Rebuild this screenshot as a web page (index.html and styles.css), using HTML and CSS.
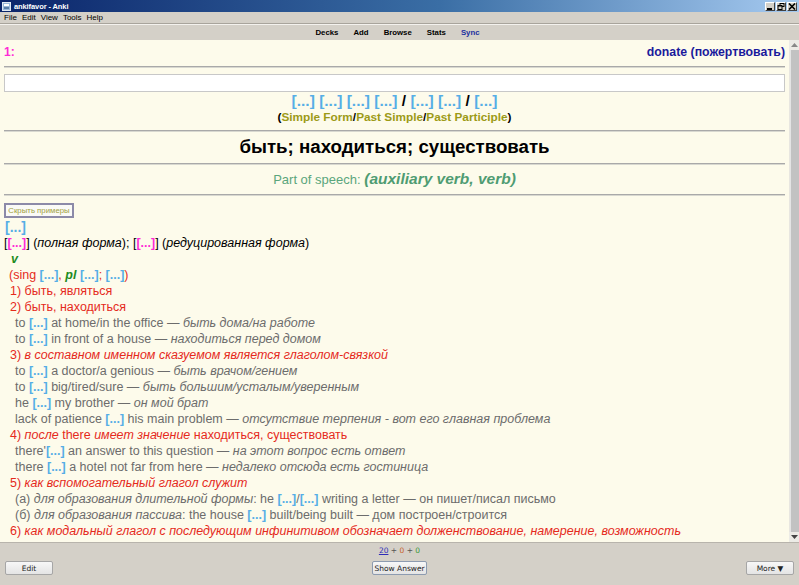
FILE: index.html
```html
<!DOCTYPE html>
<html>
<head>
<meta charset="utf-8">
<link rel="stylesheet" href="styles.css">
</head>
<body>
<div class="window">
  <div class="titlebar">
    <div class="title-left">
      <svg class="app-icon" width="9" height="9" viewBox="0 0 9 9"><rect x="0.5" y="0.5" width="8" height="8" fill="#9ab8d8" stroke="#dfe8f2"/><rect x="2" y="2" width="5" height="2" fill="#fff"/><rect x="2" y="5" width="5" height="2" fill="#5a7fa8"/></svg>
      <span class="title-text">ankifavor - Anki</span>
    </div>
    <div class="win-btns">
      <span class="win-btn"><svg width="8" height="7" viewBox="0 0 8 7"><rect x="1" y="5" width="5" height="2" fill="#000"/></svg></span>
      <span class="win-btn"><svg width="8" height="7" viewBox="0 0 8 7"><rect x="3" y="0.5" width="4" height="3" fill="none" stroke="#000"/><rect x="1" y="2.5" width="4" height="4" fill="#d4d0c8" stroke="#000"/><rect x="1" y="2.5" width="4" height="1" fill="#000"/></svg></span>
      <span class="win-btn"><svg width="8" height="7" viewBox="0 0 8 7"><path d="M1 0.5 L7 6.5 M7 0.5 L1 6.5" stroke="#000" stroke-width="1.6"/></svg></span>
    </div>
  </div>
  <div class="menubar">
    <span class="menu-item">File</span>
    <span class="menu-item">Edit</span>
    <span class="menu-item">View</span>
    <span class="menu-item">Tools</span>
    <span class="menu-item">Help</span>
  </div>
  <div class="toolbar">
    <span class="tool">Decks</span>
    <span class="tool">Add</span>
    <span class="tool">Browse</span>
    <span class="tool">Stats</span>
    <span class="tool sync">Sync</span>
  </div>
  <div class="main">
    <div class="content">
      <div class="top-row">
        <span class="num">1:</span>
        <span class="donate">donate (пожертвовать)</span>
      </div>
      <div class="rule r1"></div>
      <div class="answer-box"></div>
      <div class="forms"><span class="cl">[...]</span> <span class="cl">[...]</span> <span class="cl">[...]</span> <span class="cl">[...]</span> / <span class="cl">[...]</span> <span class="cl">[...]</span> / <span class="cl">[...]</span></div>
      <div class="forms-label">(<span class="ol">Simple Form</span>/<span class="ol">Past Simple</span>/<span class="ol">Past Participle</span>)</div>
      <div class="rule r2"></div>
      <div class="headword">быть; находиться; существовать</div>
      <div class="rule r3"></div>
      <div class="pos">Part of speech: <b><i>(auxiliary verb, verb)</i></b></div>
      <div class="rule r4"></div>
      <div class="hide-row"><button class="hide-btn">Скрыть примеры</button></div>
      <div class="entry">
        <div class="line"><span class="cl big">[...]</span></div>
        <div class="line">[<span class="mg">[...]</span>] (<i>полная форма</i>); [<span class="mg">[...]</span>] (<i>редуцированная форма</i>)</div>
        <div class="line ind-v"><b><i class="grn">v</i></b></div>
        <div class="line red ind-d">(sing <span class="cl">[...]</span>, <b><i class="grn">pl</i></b> <span class="cl">[...]</span>; <span class="cl">[...]</span>)</div>
        <div class="line red ind-n">1) быть, являться</div>
        <div class="line red ind-n">2) быть, находиться</div>
        <div class="line ex ind-e">to <span class="cl">[...]</span> at home/in the office — <i>быть дома/на работе</i></div>
        <div class="line ex ind-e">to <span class="cl">[...]</span> in front of a house — <i>находиться перед домом</i></div>
        <div class="line red ind-n">3) <i>в составном именном сказуемом является глаголом-связкой</i></div>
        <div class="line ex ind-e">to <span class="cl">[...]</span> a doctor/a genious — <i>быть врачом/гением</i></div>
        <div class="line ex ind-e">to <span class="cl">[...]</span> big/tired/sure — <i>быть большим/усталым/уверенным</i></div>
        <div class="line ex ind-e">he <span class="cl">[...]</span> my brother — <i>он мой брат</i></div>
        <div class="line ex ind-e">lack of patience <span class="cl">[...]</span> his main problem — <i>отсутствие терпения - вот его главная проблема</i></div>
        <div class="line red ind-n">4) <i>после</i> there <i>имеет значение</i> находиться, существовать</div>
        <div class="line ex ind-e">there'<span class="cl">[...]</span> an answer to this question — <i>на этот вопрос есть ответ</i></div>
        <div class="line ex ind-e">there <span class="cl">[...]</span> a hotel not far from here — <i>недалеко отсюда есть гостиница</i></div>
        <div class="line red ind-n">5) <i>как вспомогательный глагол служит</i></div>
        <div class="line ex ind-e">(а) <i>для образования длительной формы</i>: he <span class="cl">[...]</span>/<span class="cl">[...]</span> writing a letter — он пишет/писал письмо</div>
        <div class="line ex ind-e">(б) <i>для образования пассива</i>: the house <span class="cl">[...]</span> built/being built — дом построен/строится</div>
        <div class="line red ind-n">6) <i>как модальный глагол с последующим инфинитивом обозначает долженствование, намерение, возможность</i></div>
      </div>
    </div>
    <div class="scrollbar">
      <div class="sb-btn"><svg width="7" height="4" viewBox="0 0 7 4"><path d="M0 4 L3.5 0 L7 4 Z" fill="#888"/></svg></div>
      <div class="sb-thumb"></div>
      <div class="sb-btn"><svg width="7" height="4" viewBox="0 0 7 4"><path d="M0 0 L3.5 4 L7 0 Z" fill="#444"/></svg></div>
    </div>
  </div>
  <div class="bottombar">
    <div class="counts"><span class="c-new">20</span> + <span class="c-lrn">0</span> + <span class="c-rev">0</span></div>
    <div class="btn-row">
      <button class="bbtn btn-edit">Edit</button>
      <button class="bbtn btn-show">Show Answer</button>
      <button class="bbtn btn-more">More ▼</button>
    </div>
  </div>
</div>
</body>
</html>
```
FILE: styles.css
```css
html, body {
  margin: 0;
  padding: 0;
  width: 799px;
  height: 585px;
  overflow: hidden;
  background: #d4d0c8;
}
.window {
  width: 799px;
  height: 585px;
  display: flex;
  flex-direction: column;
  font-family: "DejaVu Sans", "Liberation Sans", sans-serif;
}
.titlebar {
  height: 12px;
  flex: none;
  background: linear-gradient(to right, #0a246a 0%, #3a6ea5 55%, #a6caf0 100%);
  display: flex;
  align-items: center;
  justify-content: space-between;
}
.title-left {
  display: flex;
  align-items: center;
  gap: 3px;
  padding-left: 2px;
}
.title-text {
  color: #fff;
  font-weight: bold;
  font-size: 7.5px;
  font-family: "Liberation Sans", Arial, sans-serif;
  letter-spacing: -0.1px;
}
.win-btns {
  display: flex;
  padding-right: 2px;
}
.win-btn {
  width: 10px;
  height: 9px;
  background: #d4d0c8;
  border: 1px solid;
  border-color: #fff #404040 #404040 #fff;
  box-sizing: border-box;
  display: flex;
  align-items: center;
  justify-content: center;
  margin-left: 1px;
}
.win-btn svg { display: block; }
.menubar {
  height: 11px;
  flex: none;
  display: flex;
  align-items: center;
  padding-left: 4px;
  border-bottom: 1px solid #a8a49c;
  box-shadow: 0 1px 0 #f4f2ee;
}
.menu-item {
  font-size: 8px;
  font-family: "Liberation Sans", Arial, sans-serif;
  color: #000;
  margin-right: 5px;
}
.toolbar {
  height: 16px;
  flex: none;
  display: flex;
  align-items: center;
  justify-content: center;
  gap: 15px;
  padding-top: 1px;
  padding-right: 4px;
  box-sizing: border-box;
}
.tool {
  font-size: 7.8px;
  font-family: "Liberation Sans", Arial, sans-serif;
  font-weight: bold;
  color: #000;
}
.tool.sync { color: #1c2f9f; }
.main {
  flex: none;
  height: 502px;
  display: flex;
  background: #fdfbeb;
}
.content {
  flex: 1;
  padding: 0 4px;
  overflow: hidden;
  font-family: "Liberation Sans", Arial, sans-serif;
  font-size: 12.5px;
}
.top-row {
  margin-top: 4px;
  height: 16px;
  line-height: 16px;
  display: flex;
  justify-content: space-between;
  font-weight: bold;
}
.num { color: #ff2bd6; font-size: 12px; }
.donate { color: #1a1a9c; font-size: 12.3px; }
.rule {
  height: 0;
  border-top: 1px solid #a9a9a9;
  border-bottom: 1px solid #d8d8d0;
}
.r1 { margin-top: 6px; }
.answer-box {
  margin-top: 6px;
  height: 18px;
  box-sizing: border-box;
  background: #fff;
  border: 1px solid #c8c8c8;
}
.forms {
  height: 18px;
  line-height: 18px;
  text-align: center;
  font-weight: bold;
  font-size: 15.5px;
  color: #000;
}
.cl { color: #56aee6; font-weight: bold; }
.forms-label {
  height: 14px;
  line-height: 14px;
  text-align: center;
  font-weight: bold;
  font-size: 11.8px;
  color: #000;
}
.ol { color: #9c9a16; }
.r2 { margin-top: 6px; }
.headword {
  margin-top: 3px;
  height: 24px;
  line-height: 24px;
  text-align: center;
  font-weight: bold;
  font-size: 18.7px;
  color: #000;
}
.r3 { margin-top: 4px; }
.pos {
  margin-top: 4px;
  height: 20px;
  line-height: 20px;
  text-align: center;
  color: #5aa67c;
  font-size: 13px;
}
.pos b { font-size: 15.5px; color: #4f9c72; }
.r4 { margin-top: 5px; }
.hide-row {
  margin-top: 6px;
  height: 15px;
}
.hide-btn {
  height: 15px;
  width: 70px;
  padding: 0;
  margin: 0;
  box-sizing: border-box;
  background: #fafaf6;
  border: 2px solid #8c8aa8;
  font-size: 7.8px;
  white-space: nowrap;
  text-align: center;
  color: #a0a040;
  font-family: "Liberation Sans", Arial, sans-serif;
}
.entry { margin-top: 2px; }
.line {
  height: 16px;
  line-height: 16px;
  white-space: nowrap;
  color: #000;
}
.big { font-size: 14px; padding-left: 1px; }
.mg { color: #ff2bd6; font-weight: bold; }
.grn { color: #1e8c1e; }
.red { color: #e52a1c; }
.ex { color: #6c6c6c; }
.ind-v { padding-left: 7px; }
.ind-d { padding-left: 5px; }
.ind-n { padding-left: 6px; }
.ind-e { padding-left: 11px; }
.scrollbar {
  width: 10px;
  flex: none;
  display: flex;
  flex-direction: column;
  background: #e8e6e0;
}
.sb-btn {
  height: 10px;
  flex: none;
  display: flex;
  align-items: center;
  justify-content: center;
  background: #ecebe6;
}
.sb-btn svg { display: block; }
.sb-thumb {
  flex: 1;
  background: #c2c2c2;
  border-left: 1px solid #e4e4e4;
  margin-left: 1px;
}
.bottombar {
  flex: 1;
  border-top: 1px solid #b8b4ac;
  display: flex;
  flex-direction: column;
}
.counts {
  text-align: center;
  font-size: 7.5px;
  color: #555;
  height: 12px;
  line-height: 12px;
  margin-top: 2px;
}
.c-new { color: #2d2db8; text-decoration: underline; }
.c-lrn { color: #c8602a; }
.c-rev { color: #3a9a3a; }
.btn-row {
  margin-top: 4px;
  display: flex;
  justify-content: space-between;
  align-items: center;
  padding: 0 5px;
}
.bbtn {
  height: 14px;
  box-sizing: border-box;
  padding: 0;
  margin: 0;
  border: 1px solid #a6a6a6;
  border-radius: 2px;
  background: linear-gradient(#f7f7f7, #e4e4e4);
  font-size: 7.5px;
  font-family: "DejaVu Sans", sans-serif;
  color: #222;
}
.btn-edit { width: 48px; }
.btn-show { width: 55px; border-color: #8d9bb0; }
.btn-more { width: 48px; }
```
